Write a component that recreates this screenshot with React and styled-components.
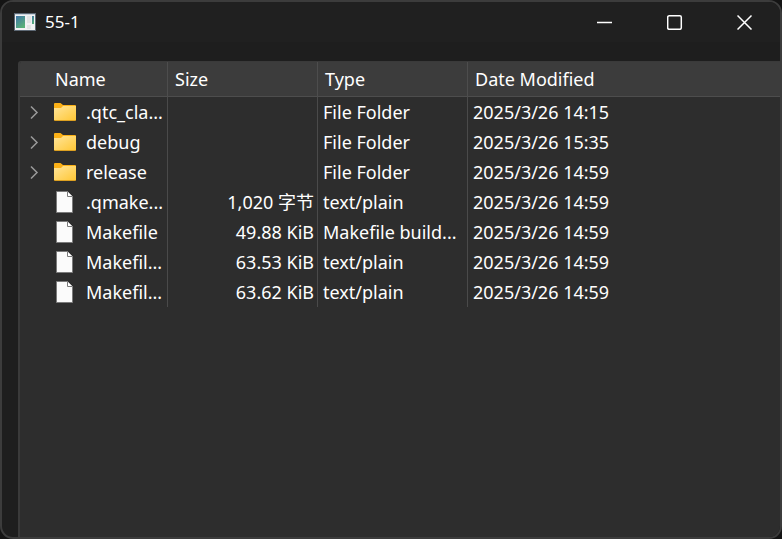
import React from "react";
import styled, { createGlobalStyle } from "styled-components";

const GlobalStyle = createGlobalStyle`
  * {
    box-sizing: border-box;
  }
  body {
    margin: 0;
    background: #141414;
    color: #ffffff;
    font-family: "Noto Sans", "Noto Sans CJK SC", sans-serif;
    font-size: 18px;
    line-height: 30px;
  }
`;

const Window = styled.div`
  display: flex;
  flex-direction: column;
  min-height: 100vh;
  overflow: hidden;
  border: 2px solid #3c3c3c;
  border-radius: 13px;
  background: #1e1e1e;
`;

const TitleBar = styled.header`
  display: flex;
  align-items: center;
  height: 40px;
  padding-left: 12px;
  background: #202020;
`;

const Title = styled.h1`
  flex: 1;
  margin: 0 0 0 9px;
  font-size: 17px;
  font-weight: 400;
`;

const WindowButton = styled.button`
  display: flex;
  align-items: center;
  justify-content: center;
  width: 70px;
  height: 40px;
  padding: 0;
  border: 0;
  background: transparent;
  color: #ffffff;
`;

const Panel = styled.main`
  flex: 1;
  margin: 19px 0 0 16px;
  border: solid #3a3a3a;
  border-width: 1px 0 0 2px;
  border-top-left-radius: 3px;
  background: #2d2d2d;
  overflow: hidden;
`;

const FileTable = styled.table`
  width: 100%;
  table-layout: fixed;
  border-collapse: separate;
  border-spacing: 0;
`;

const Column = styled.col`
  width: ${(p) => p.$width || "auto"};
`;

const HeaderCell = styled.th`
  height: 35px;
  padding: 0 0 0 ${(p) => (p.$first ? 35 : 7)}px;
  border-right: ${(p) => (p.$last ? 0 : 1)}px solid #4d4d4d;
  border-bottom: 1px solid #4d4d4d;
  background: #3c3c3c;
  font-weight: 400;
  text-align: left;
  white-space: nowrap;
`;

const Cell = styled.td`
  height: 30px;
  padding: 0 3px 0 5px;
  border-right: ${(p) => (p.$last ? 0 : 1)}px solid #4a4a4a;
  text-align: ${(p) => p.$align || "left"};
  white-space: nowrap;
  overflow: hidden;
`;

const NameContent = styled.div`
  display: grid;
  grid-template-columns: 29px 32px 1fr;
  align-items: center;
`;

const Expander = styled.button`
  grid-column: 1;
  display: flex;
  align-items: center;
  width: 20px;
  height: 30px;
  padding: 0 0 0 4px;
  border: 0;
  background: transparent;
  color: #9a9a9a;
`;

const IconSlot = styled.span`
  grid-column: 2;
  display: flex;
`;

const FileName = styled.span`
  grid-column: 3;
`;

function AppIcon() {
  return (
    <svg width="22" height="18" viewBox="0 0 22 18" aria-hidden="true">
      <defs>
        <linearGradient id="app" x1="0" y1="0" x2="0.6" y2="1">
          <stop offset="0" stopColor="#3f73a8" />
          <stop offset="1" stopColor="#58b078" />
        </linearGradient>
      </defs>
      <rect width="22" height="18" fill="#5d6874" />
      <rect x="1" y="1" width="20" height="16" fill="#f1f2f3" />
      <rect x="1" y="1" width="20" height="1" fill="#c8d2dc" />
      <rect x="2" y="3" width="9" height="12" fill="url(#app)" />
      <rect x="13" y="3" width="4" height="7" fill="#e2e4e5" />
      <rect x="13" y="12" width="4" height="4" fill="#e2e4e5" />
      <rect x="18" y="3" width="2" height="8" fill="url(#app)" />
    </svg>
  );
}

function FolderIcon() {
  return (
    <svg width="22" height="18" viewBox="0 0 22 18" aria-hidden="true">
      <defs>
        <linearGradient id="folder" x1="0" y1="0" x2="1" y2="1">
          <stop offset="0" stopColor="#ffe59a" />
          <stop offset="1" stopColor="#ffc736" />
        </linearGradient>
      </defs>
      <path d="M0 1 Q0 0 1 0H6.500L9 2H21Q22 2 22 3V8H0Z" fill="#fbb016" />
      <path d="M0 5H7L9 3H22V17H0Z" fill="url(#folder)" />
      <path d="M0 17H22V17.300Q22 18 21 18H1Q0 18 0 17.300Z" fill="#dda021" />
    </svg>
  );
}

function DocumentIcon() {
  return (
    <svg width="22" height="22" viewBox="0 0 22 22" aria-hidden="true">
      <path d="M2.500 .5H13.500L18.500 5.500V21.500H2.500Z" fill="#fbfbfb" stroke="#7b7b7b" />
      <path d="M13.500 .5V5.500H18.500" fill="#ffffff" stroke="#7b7b7b" />
    </svg>
  );
}

function Chevron() {
  return (
    <svg width="10" height="14" viewBox="0 0 10 14" aria-hidden="true">
      <path d="M2 1.500L8 7.500L2 13.500" fill="none" stroke="currentColor" strokeWidth="1.500" />
    </svg>
  );
}

const windowActions = [
  { label: "Minimize", shape: <path d="M0 8.500H15" /> },
  { label: "Maximize", shape: <rect x=".7" y="1.700" width="13.600" height="13.600" rx="1.500" /> },
  { label: "Close", shape: <path d="M.5 1.500L14.500 15.500M14.500 1.500L.5 15.500" /> },
];

const files = [
  { name: ".qtc_cla...", folder: true, size: "", type: "File Folder", modified: "2025/3/26 14:15" },
  { name: "debug", folder: true, size: "", type: "File Folder", modified: "2025/3/26 15:35" },
  { name: "release", folder: true, size: "", type: "File Folder", modified: "2025/3/26 14:59" },
  { name: ".qmake...", size: "1,020 字节", type: "text/plain", modified: "2025/3/26 14:59" },
  { name: "Makefile", size: "49.88 KiB", type: "Makefile build...", modified: "2025/3/26 14:59" },
  { name: "Makefil...", size: "63.53 KiB", type: "text/plain", modified: "2025/3/26 14:59" },
  { name: "Makefil...", size: "63.62 KiB", type: "text/plain", modified: "2025/3/26 14:59" },
];

export default function App() {
  return (
    <>
      <GlobalStyle />
      <Window>
        <TitleBar>
          <AppIcon />
          <Title>55-1</Title>
          {windowActions.map((action) => (
            <WindowButton key={action.label} type="button" aria-label={action.label}>
              <svg width="16" height="16" viewBox="0 0 16 16" fill="none" stroke="currentColor" strokeWidth="1.500" aria-hidden="true">
                {action.shape}
              </svg>
            </WindowButton>
          ))}
        </TitleBar>
        <Panel>
          <FileTable>
            <colgroup>
              <Column $width="148px" />
              <Column $width="150px" />
              <Column $width="150px" />
              <Column />
            </colgroup>
            <thead>
              <tr>
                <HeaderCell $first>Name</HeaderCell>
                <HeaderCell>Size</HeaderCell>
                <HeaderCell>Type</HeaderCell>
                <HeaderCell $last>Date Modified</HeaderCell>
              </tr>
            </thead>
            <tbody>
              {files.map((file, index) => (
                <tr key={index}>
                  <Cell>
                    <NameContent>
                      {file.folder && (
                        <Expander type="button" aria-label={`Expand ${file.name}`}>
                          <Chevron />
                        </Expander>
                      )}
                      <IconSlot>{file.folder ? <FolderIcon /> : <DocumentIcon />}</IconSlot>
                      <FileName>{file.name}</FileName>
                    </NameContent>
                  </Cell>
                  <Cell $align="right">{file.size}</Cell>
                  <Cell>{file.type}</Cell>
                  <Cell $last>{file.modified}</Cell>
                </tr>
              ))}
            </tbody>
          </FileTable>
        </Panel>
      </Window>
    </>
  );
}
